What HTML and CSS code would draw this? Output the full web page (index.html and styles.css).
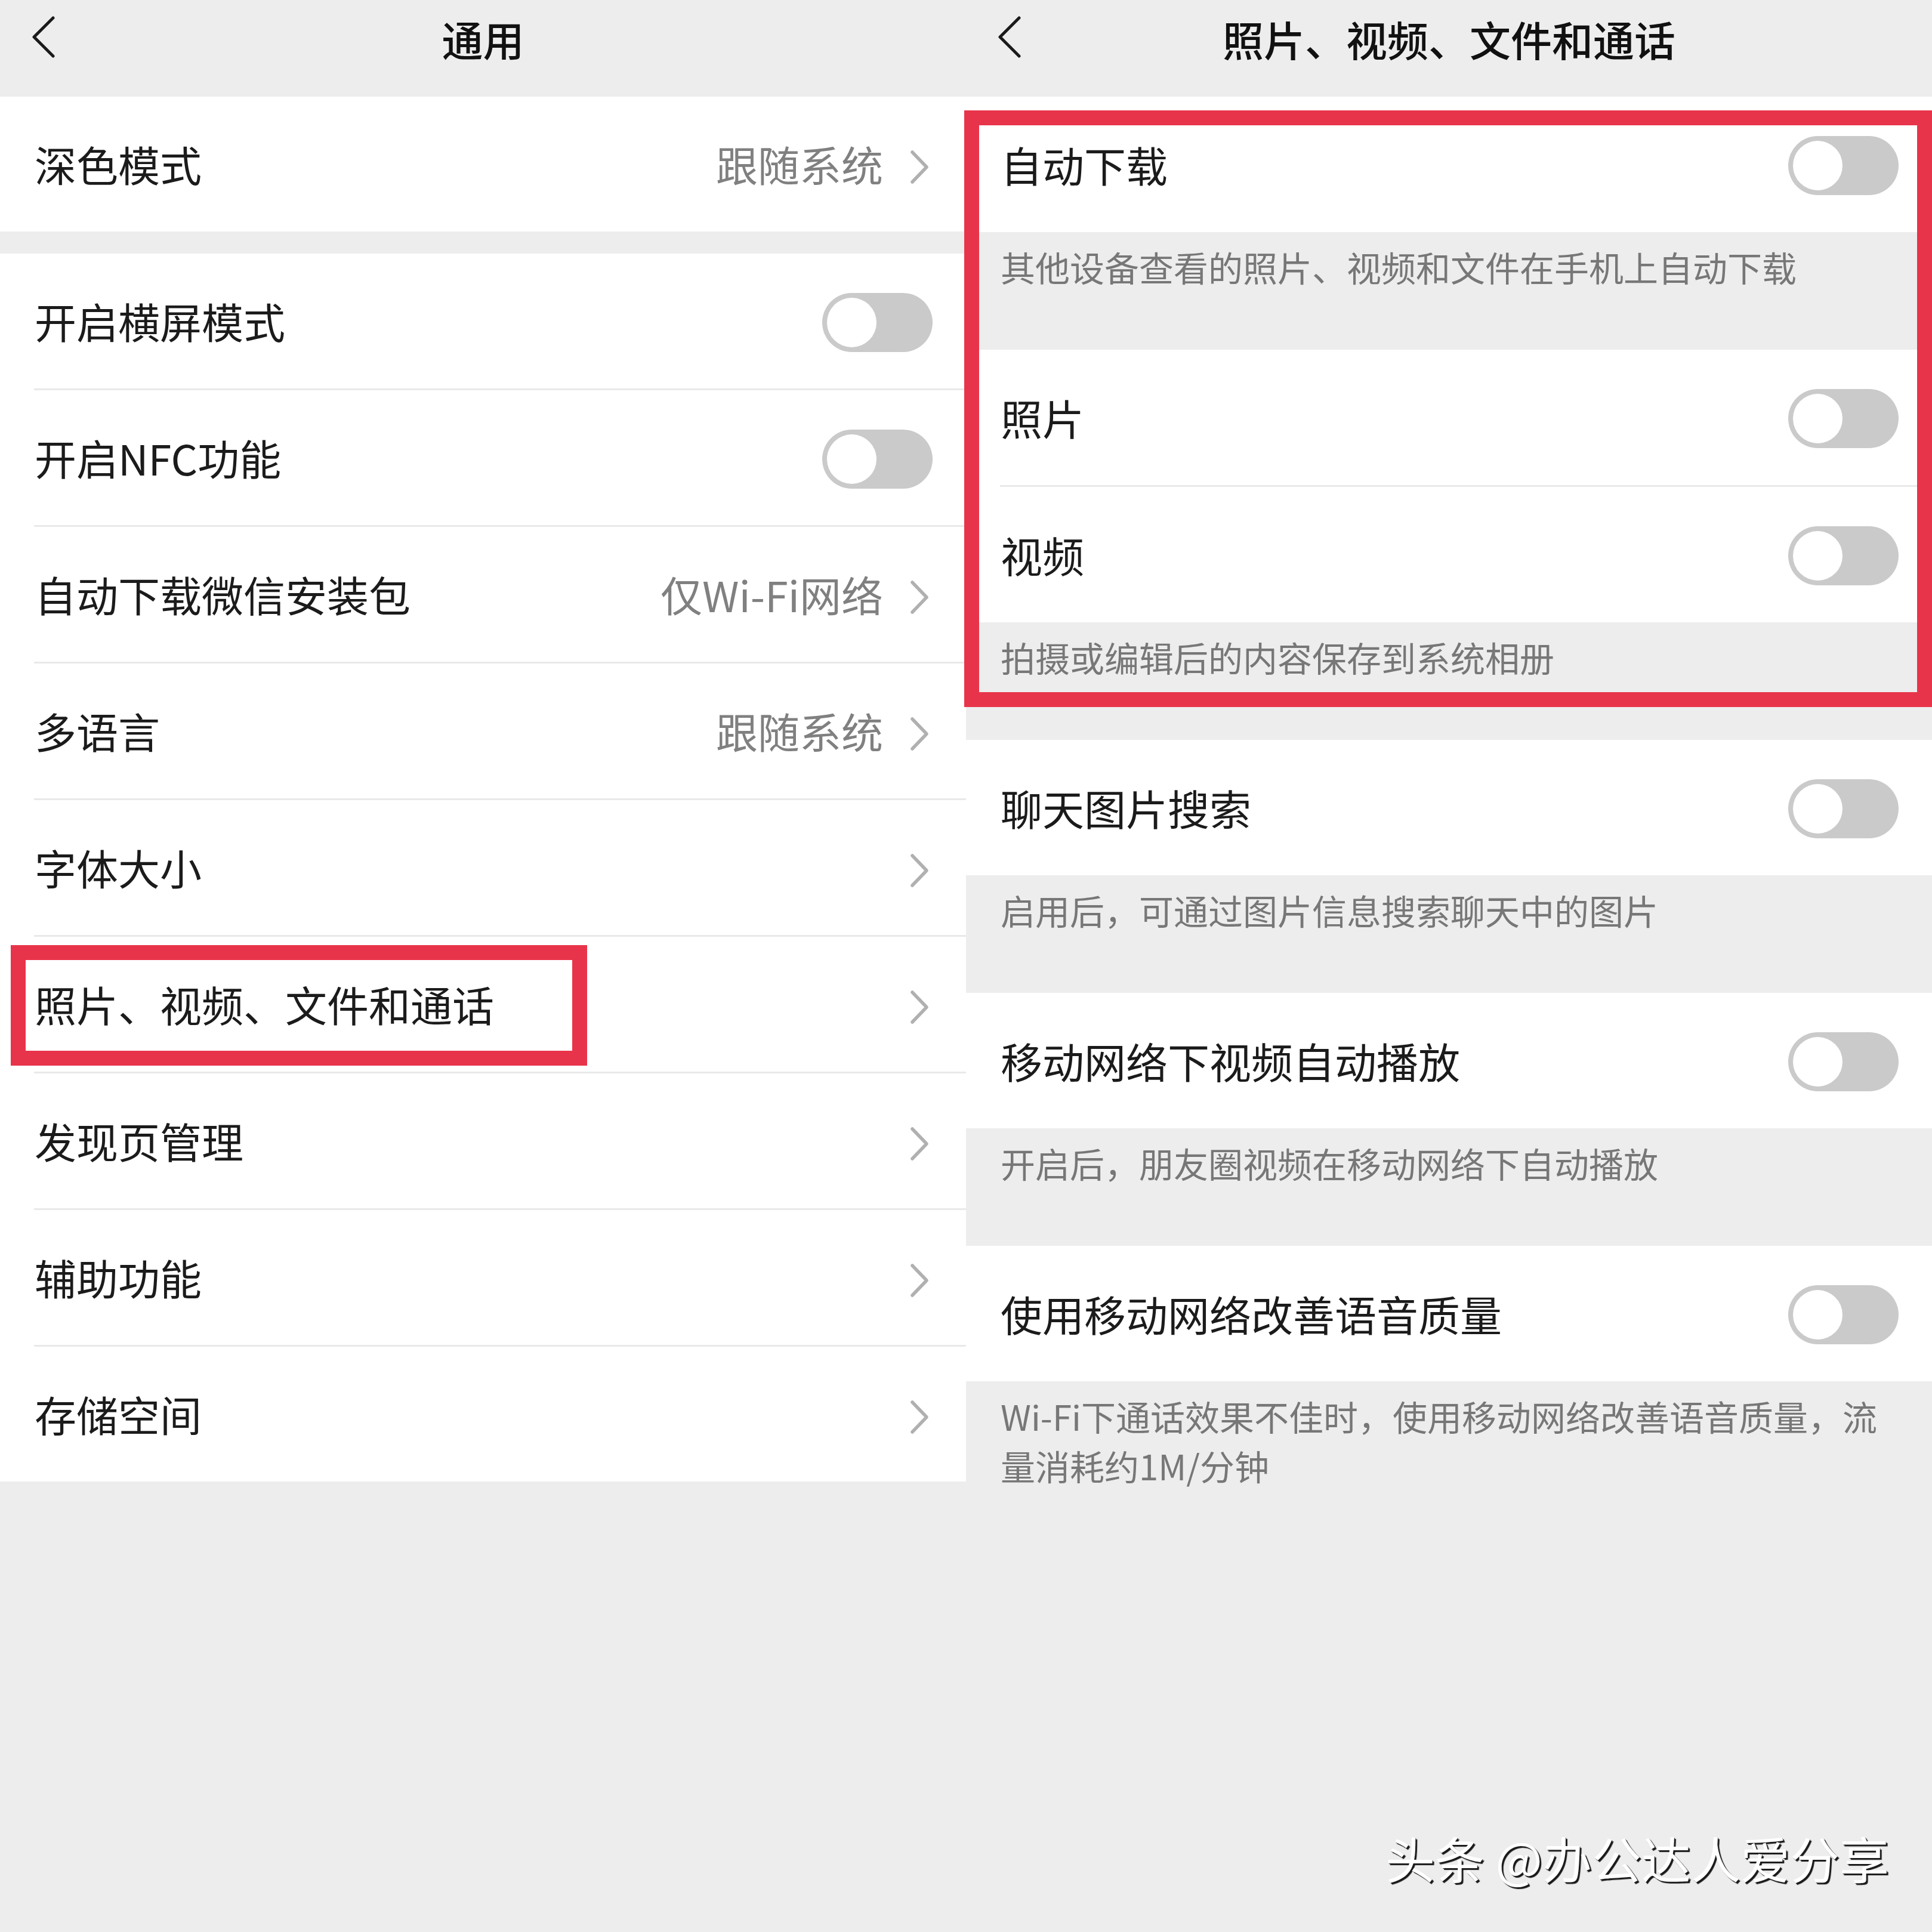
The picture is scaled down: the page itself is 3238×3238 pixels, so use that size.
FILE: index.html
```html
<!DOCTYPE html>
<html lang="zh-CN">
<head>
<meta charset="utf-8">
<title>通用 / 照片、视频、文件和通话</title>
<link rel="stylesheet" href="styles.css">
</head>
<body>
<div class="screen">
  <section class="panel">
    <header class="nav">
      <svg class="back" viewBox="0 0 40 72" width="40" height="72"><polyline points="37,4 5,36 37,68" /></svg>
      <h1 class="nav-title">通用</h1>
      <span></span>
    </header>
    <div class="group">
      <div class="cell"><span class="label">深色模式</span><span class="value">跟随系统</span><svg class="chev" viewBox="0 0 34 58" width="34" height="58"><polyline points="5,4 29,29 5,54" /></svg></div>
    </div>
    <div class="group gap">
      <div class="cell"><span class="label">开启横屏模式</span><span class="switch"><span class="knob"></span></span></div>
      <div class="sep"></div>
      <div class="cell"><span class="label">开启NFC功能</span><span class="switch"><span class="knob"></span></span></div>
      <div class="sep"></div>
      <div class="cell"><span class="label">自动下载微信安装包</span><span class="value">仅Wi-Fi网络</span><svg class="chev" viewBox="0 0 34 58" width="34" height="58"><polyline points="5,4 29,29 5,54" /></svg></div>
      <div class="sep"></div>
      <div class="cell"><span class="label">多语言</span><span class="value">跟随系统</span><svg class="chev" viewBox="0 0 34 58" width="34" height="58"><polyline points="5,4 29,29 5,54" /></svg></div>
      <div class="sep"></div>
      <div class="cell"><span class="label">字体大小</span><svg class="chev" viewBox="0 0 34 58" width="34" height="58"><polyline points="5,4 29,29 5,54" /></svg></div>
      <div class="sep"></div>
      <div class="cell marked"><span class="label">照片、视频、文件和通话</span><svg class="chev" viewBox="0 0 34 58" width="34" height="58"><polyline points="5,4 29,29 5,54" /></svg><span class="mark-left"></span></div>
      <div class="sep"></div>
      <div class="cell"><span class="label">发现页管理</span><svg class="chev" viewBox="0 0 34 58" width="34" height="58"><polyline points="5,4 29,29 5,54" /></svg></div>
      <div class="sep"></div>
      <div class="cell"><span class="label">辅助功能</span><svg class="chev" viewBox="0 0 34 58" width="34" height="58"><polyline points="5,4 29,29 5,54" /></svg></div>
      <div class="sep"></div>
      <div class="cell"><span class="label">存储空间</span><svg class="chev" viewBox="0 0 34 58" width="34" height="58"><polyline points="5,4 29,29 5,54" /></svg></div>
    </div>
  </section>

  <section class="panel right">
    <header class="nav">
      <svg class="back" viewBox="0 0 40 72" width="40" height="72"><polyline points="37,4 5,36 37,68" /></svg>
      <h1 class="nav-title">照片、视频、文件和通话</h1>
      <span></span>
    </header>
    <div class="group">
      <div class="cell tall"><span class="label">自动下载</span><span class="switch"><span class="knob"></span></span></div>
    </div>
    <p class="desc">其他设备查看的照片、视频和文件在手机上自动下载</p>
    <div class="group">
      <div class="cell tall"><span class="label">照片</span><span class="switch"><span class="knob"></span></span></div>
      <div class="sep"></div>
      <div class="cell tall"><span class="label">视频</span><span class="switch"><span class="knob"></span></span></div>
    </div>
    <p class="desc">拍摄或编辑后的内容保存到系统相册</p>
    <div class="group">
      <div class="cell tall"><span class="label">聊天图片搜索</span><span class="switch"><span class="knob"></span></span></div>
    </div>
    <p class="desc">启用后，可通过图片信息搜索聊天中的图片</p>
    <div class="group">
      <div class="cell tall"><span class="label">移动网络下视频自动播放</span><span class="switch"><span class="knob"></span></span></div>
    </div>
    <p class="desc">开启后，朋友圈视频在移动网络下自动播放</p>
    <div class="group">
      <div class="cell tall"><span class="label">使用移动网络改善语音质量</span><span class="switch"><span class="knob"></span></span></div>
    </div>
    <p class="desc multi">Wi-Fi下通话效果不佳时，使用移动网络改善语音质量，流<br>量消耗约1M/分钟</p>
    <span class="mark-right"></span>
  </section>

  <div class="watermark">头条 @办公达人爱分享</div>
</div>
</body>
</html>
```

FILE: styles.css
```css
* { box-sizing: border-box; }

html, body {
  margin: 0;
  padding: 0;
  background: #ededed;
}

body {
  font-family: "Noto Sans CJK SC", "Noto Sans", "Liberation Sans", sans-serif;
  color: #1b1b1b;
}

.screen {
  position: relative;
  width: 3238px;
  height: 3238px;
  display: flex;
  background: #ededed;
}

.panel {
  position: relative;
  width: 1619px;
  flex: 0 0 1619px;
}

.nav {
  height: 162px;
  padding-bottom: 32px;
  display: grid;
  grid-template-columns: 1fr auto 1fr;
  align-items: center;
}

.back {
  margin-left: 52px;
  margin-top: -6px;
  display: block;
}

.back polyline {
  fill: none;
  stroke: #1a1a1a;
  stroke-width: 5;
  stroke-linecap: round;
  stroke-linejoin: round;
}

.nav-title {
  margin: 0;
  font-size: 69px;
  font-weight: 500;
  line-height: 1;
  color: #111;
  white-space: nowrap;
}

.group {
  background: #fff;
}

.group.gap {
  margin-top: 37px;
}

.cell {
  position: relative;
  height: 226px;
  display: flex;
  align-items: center;
  padding: 0 56px 0 58px;
}

.cell.tall {
  height: 227px;
}

.label {
  flex: 1;
  font-size: 70px;
  line-height: 1;
  white-space: nowrap;
}

.value {
  font-size: 70px;
  line-height: 1;
  color: #808080;
  margin-right: 44px;
  white-space: nowrap;
}

.chev {
  display: block;
  margin-right: 5px;
  margin-top: 10px;
}

.chev polyline {
  fill: none;
  stroke: #b0b0b0;
  stroke-width: 5.5;
  stroke-linecap: round;
  stroke-linejoin: round;
}

.sep {
  height: 3px;
  margin-left: 57px;
  background: #e9e9e9;
}

.switch {
  position: relative;
  width: 185px;
  height: 99px;
  border-radius: 50px;
  background: #cacaca;
  margin-top: 4px;
}

.knob {
  position: absolute;
  left: 8px;
  top: 8px;
  width: 83px;
  height: 83px;
  border-radius: 50%;
  background: #fff;
}

.desc {
  margin: 0;
  height: 197px;
  padding: 17px 58px 0 58px;
  font-size: 58px;
  line-height: 83px;
  color: #777;
}

.desc.multi {
  height: auto;
  white-space: nowrap;
}

.mark-left {
  position: absolute;
  left: 18px;
  top: 14px;
  width: 966px;
  height: 202px;
  border: 25px solid #e8344a;
}

.mark-right {
  position: absolute;
  left: -3px;
  top: 185px;
  width: 1622px;
  height: 1000px;
  border: 25px solid #e8344a;
}

.watermark {
  position: absolute;
  right: 72px;
  top: 3072px;
  font-size: 83px;
  line-height: 1;
  color: #fff;
  white-space: nowrap;
  text-shadow: 3px 3px 1px #1a1a1a, 1px 1px 0 #444;
}
```
